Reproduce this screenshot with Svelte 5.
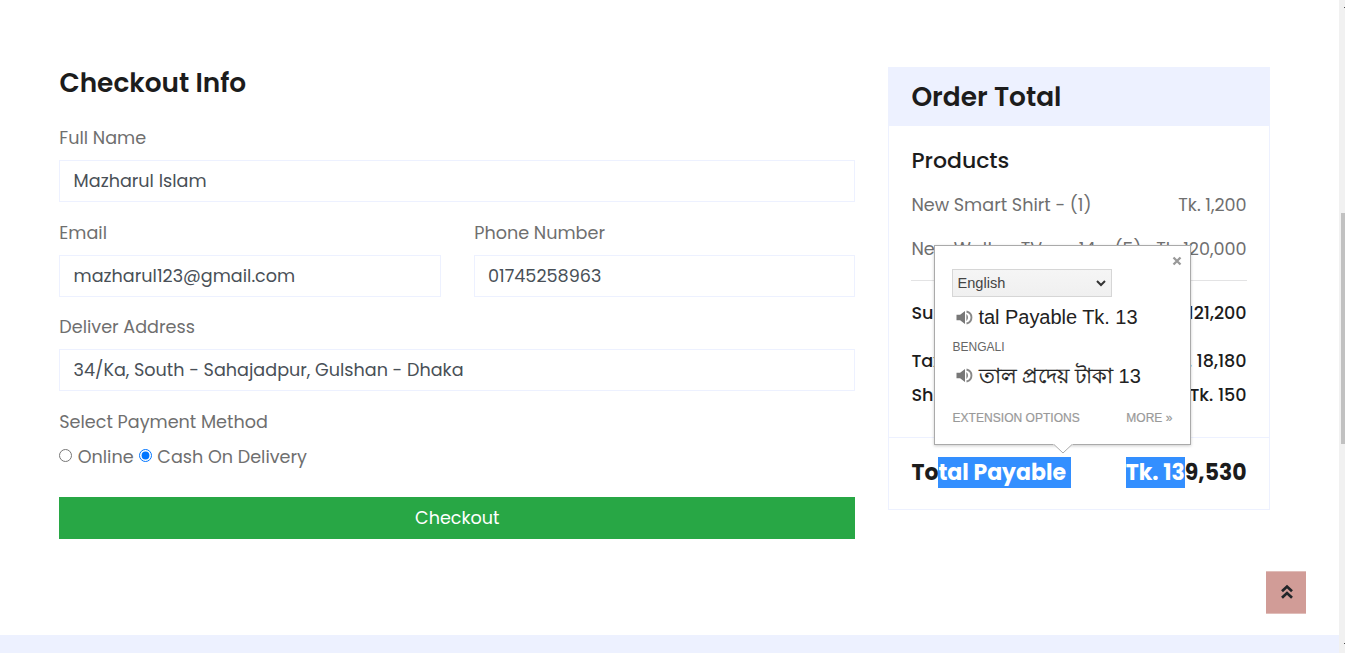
<script>
  const products = [
    { name: 'New Smart Shirt - (1)', price: 'Tk. 1,200' },
    { name: 'New Walton TV ne-14 - (5)', price: 'Tk. 120,000' }
  ];
  let fullName = $state('Mazharul Islam');
  let email = $state('mazharul123@gmail.com');
  let phone = $state('01745258963');
  let address = $state('34/Ka, South - Sahajadpur, Gulshan - Dhaka');
  let payment = $state('cash');
</script>

{#snippet speaker()}
  <svg class="speaker" viewBox="0 0 17 15" width="17" height="15" aria-hidden="true">
    <path d="M0.5 4.800h3.600L9 1v13L4.100 10.200H.5z" fill="#777" />
    <path d="M10.300 4.100c2.300 1.400 2.300 5.400 0 6.800z" fill="#888" />
    <path d="M10.500 1.500c6.600 1.500 6.600 10.500 0 12" fill="none" stroke="#888" stroke-width="1.900" />
  </svg>
{/snippet}

<div class="screen">
  <main>
    <form class="checkout" onsubmit={(e) => e.preventDefault()}>
      <h2>Checkout Info</h2>
      <div class="fields">
        <label class="field wide"><span>Full Name</span><input bind:value={fullName} /></label>
        <label class="field"><span>Email</span><input bind:value={email} /></label>
        <label class="field"><span>Phone Number</span><input class="phone" bind:value={phone} /></label>
        <label class="field wide"><span>Deliver Address</span><input bind:value={address} /></label>
      </div>
      <div class="method">Select Payment Method</div>
      <div class="radios">
        <input type="radio" bind:group={payment} value="online" /><span>Online</span>
        <input type="radio" bind:group={payment} value="cash" /><span>Cash On Delivery</span>
      </div>
      <button class="submit">Checkout</button>
    </form>

    <aside>
      <header><h2>Order Total</h2></header>
      <div class="body">
        <h3>Products</h3>
        {#each products as p}
          <div class="row product"><span>{p.name}</span><span>{p.price}</span></div>
        {/each}
        <hr />
        <div class="row dark sub"><span>Subtotal</span><span>Tk. 121,200</span></div>
        <div class="row dark tax"><span>Tax</span><span>Tk. 18,180</span></div>
        <div class="row dark ship"><span>Shipping</span><span>Tk. 150</span></div>
      </div>
      <footer class="row">
        <span class="total"><span>To</span><mark class="m1">tal Payable</mark></span>
        <span class="total"><mark>Tk. 13</mark><span>9,530</span></span>
      </footer>

      <div class="popup">
        <span class="close"><svg viewBox="0 0 10 10" width="10" height="10"><path d="M1.500 1.500l7 7M8.500 1.500l-7 7" stroke="#999" stroke-width="2.300" /></svg></span>
        <div class="select"><span>English</span><svg viewBox="0 0 10 7" width="10" height="7"><path d="M1 1l4 4 4-4" fill="none" stroke="#333" stroke-width="2" /></svg></div>
        <div class="phrase first">{@render speaker()}<span>tal Payable Tk. 13</span></div>
        <div class="lang">BENGALI</div>
        <div class="phrase second">{@render speaker()}<span><span class="bn">তাল প্রদেয় টাকা</span> 13</span></div>
        <div class="links"><span>EXTENSION OPTIONS</span><span>MORE »</span></div>
        <svg class="tip" viewBox="0 0 20 10" width="20" height="10"><path d="M0 0L10 9 20 0z" fill="#fff" /><path d="M1 .5L10 9 19 .5" fill="none" stroke="#aaa" /></svg>
      </div>
    </aside>
  </main>
  <div class="band"></div>
  <div class="to-top"><svg viewBox="0 0 12 16" width="12" height="16"><path d="M1 7.300L6 2.500l5 4.800M1 13.800L6 9l5 4.800" fill="none" stroke="#212529" stroke-width="2.700" /></svg></div>
  <div class="scrollbar"><i class="arrow"></i><div class="thumb"></div><i class="arrow bottom"></i></div>
</div>

<style>
  :global(body) { overflow: hidden; background: #fff; }
  * { box-sizing: border-box; }
  .screen { position: relative; display: flex; flex-direction: column; width: 1345px; height: 653px; overflow: hidden; font-family: Poppins, Inter, sans-serif; font-size: 17.600px; color: #6f6f6f; }
  main { display: grid; grid-template-columns: 796px 382px; column-gap: 33px; padding: 67px 0 0 59px; height: 635px; align-items: start; }
  h2, h3 { margin: 0; color: #1c1c1c; white-space: nowrap; }
  h2 { font-size: 26.400px; font-weight: 600; line-height: 32px; }
  .checkout h2 { padding-left: .4px; }
  .fields { display: grid; grid-template-columns: 382px 381px; column-gap: 33px; row-gap: 17.500px; padding-top: 26px; }
  .field { display: flex; flex-direction: column; }
  .wide { grid-column: 1 / 3; }
  .field span { line-height: 27px; height: 35px; align-self: flex-start; white-space: nowrap; padding-left: .3px; }
  .field input { width: 100%; height: 42px; border: 1px solid #edf1ff; padding: 0 13.600px; font: inherit; color: #495057; outline: 0; background: #fff; border-radius: 0; }
  .field .phone { padding-left: 13px; }
  .method { padding: 18px 0 0 .3px; line-height: 27px; }
  .radios { display: flex; align-items: center; height: 26px; margin-top: 8px; white-space: nowrap; }
  .radios input { width: 13px; height: 13px; margin: 0 5.700px 3px 0; }
  .radios input + span { margin-right: 5px; }
  .submit { display: block; width: 100%; height: 42px; margin-top: 27px; border: 0; background: #28a745; color: #fff; font: inherit; padding: 0 0 0 .6px; }
  aside { position: relative; height: 443px; border: 1px solid #edf1ff; display: flex; flex-direction: column; color: #6f6f6f; }
  header { background: #edf1ff; height: 58px; padding: 13px 22.400px 0; }
  .body { height: 311px; padding: 21px 22.400px 0; }
  h3 { font-size: 22px; font-weight: 500; line-height: 28px; margin-bottom: 16px; }
  .row { display: flex; justify-content: space-between; white-space: nowrap; }
  .product { line-height: 28px; height: 44px; }
  hr { border: 0; border-top: 1px solid #e3e3e4; margin: 1px 0 18px; }
  .dark { color: #1c1c1c; font-weight: 500; line-height: 28px; }
  .sub { height: 48px; }
  .tax { height: 34px; }
  footer { border-top: 1px solid #edf1ff; padding: 19px 22.400px 0; font-size: 22px; font-weight: 700; color: #1c1c1c; line-height: 31px; flex: 1; }
  .total { display: flex; height: 31px; }
  mark { background: #338fff; color: #fff; }
  .m1 { width: 133px; }
  .popup { position: absolute; left: 45px; top: 177px; width: 257px; height: 200px; background: #fff; border: 1px solid #aaa; box-shadow: 0 1px 3px rgba(0,0,0,.2); padding: 23px 17px 0; font-family: "Liberation Sans", Arial, sans-serif; color: #222; }
  .close { position: absolute; right: 8px; top: 10px; display: flex; }
  .select { width: 160px; height: 28px; border: 1px solid #d6d6d6; background: linear-gradient(#f5f5f5, #f0f0f0); display: flex; align-items: center; justify-content: space-between; padding: 0 5px 0 4.500px; font-size: 14.600px; color: #444; }
  .phrase { display: flex; align-items: center; font-size: 20px; white-space: nowrap; line-height: 26px; gap: 5.500px; padding-left: 4px; }
  .first { margin-top: 7px; }
  .first span { letter-spacing: -.04px; }
  .lang { font-size: 12px; line-height: 16px; color: #666; margin-top: 9px; padding-left: .5px; }
  .second { margin-top: 8px; height: 26px; }
  .second :global(.speaker) { margin-bottom: 2px; }
  .bn { font-size: 20.700px; -webkit-text-stroke: .3px #222; }
  .links { display: flex; justify-content: space-between; font-size: 12px; color: #999; line-height: 16px; margin-top: 21px; padding: 0 .5px; white-space: nowrap; letter-spacing: .04px; -webkit-text-stroke: .2px #999; }
  .tip { position: absolute; left: 118px; top: 198px; }
  .band { height: 18px; background: #edf1ff; }
  .to-top { position: absolute; left: 1266px; top: 571px; width: 40px; height: 43px; border: solid #e0bdb9; border-width: 1px 0; background: #d19c97; display: flex; align-items: center; justify-content: center; padding: 0 0 2px 1px; }
  .scrollbar { position: absolute; right: 0; top: 0; width: 6px; height: 653px; background: #f1f1f1; padding: 213px 0 0 2px; }
  .thumb { height: 231px; background: #c1c1c1; }
  .arrow { position: absolute; right: 0; top: 7px; width: 1px; height: 1px; background: #505050; }
  .bottom { top: 643px; }
</style>
